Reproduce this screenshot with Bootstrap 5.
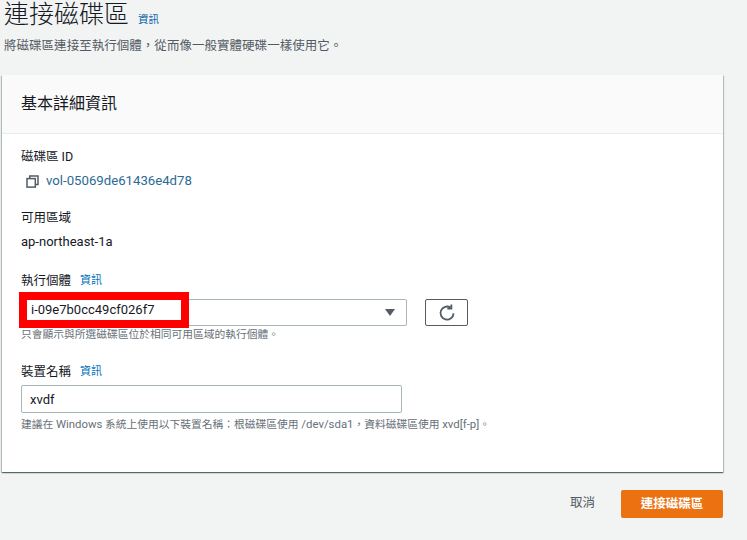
<!DOCTYPE html>
<html lang="zh-Hant">
<head>
<meta charset="utf-8">
<title>連接磁碟區</title>
<link href="https://cdn.jsdelivr.net/npm/bootstrap@5.3.0/dist/css/bootstrap.min.css" rel="stylesheet">
<style>
html,body{height:540px;overflow:hidden}
body{background:#f2f3f3;color:#16191f;font-family:"Roboto","Noto Sans CJK TC",sans-serif;font-size:13px;line-height:20px;width:747px}
.page-head{padding:0 0 0 4px;height:75px}
.page-title{font-size:25px;line-height:30px;font-weight:300;margin:0;color:#16191f;display:flex;align-items:baseline}
.info-link{color:#0073bb;font-size:11px;line-height:16px;text-decoration:none}
.page-title .info-link{margin-left:9px;font-weight:400;color:#0b63a8;font-size:10.5px}
.page-sub{font-size:12.5px;line-height:18px;color:#545b64;margin:7px 0 0;height:18px;letter-spacing:.03px}
.vol-panel{margin-left:2px;width:721px;height:397px;background:#fff;border:0;border-radius:0;box-shadow:0 1px 1px 0 rgba(0,28,36,.45),1px 1px 1px 0 rgba(0,28,36,.2),-1px 1px 1px 0 rgba(0,28,36,.2)}
.vol-head{background:#fafafa;border-bottom:1px solid #eaeded;height:59px;padding:0 19px;display:flex;align-items:center}
.vol-head h2{font-size:16px;font-weight:400;margin:0;line-height:22px}
.vol-body{padding:13px 19px 0}
.fld-label{font-size:12.5px;line-height:20px;height:20px;display:flex;align-items:center;gap:9px}
.fld-gap{margin-top:17px}
.fld-gap-md{margin-top:19px}
.fld-value{line-height:20px;font-size:13px;height:20px;margin-top:4px;display:flex;align-items:center}
.vol-link{color:#2c6a94;text-decoration:none;font-size:13.2px}
.copy-ico{width:13px;height:13px;margin:0 7px 0 5px;flex:none}
.sel-row{display:flex;gap:18px;margin-top:8px;margin-left:-2px}
.sel-box{width:388px;height:27px;border:1px solid #aab7b8;border-radius:2px;background:#fff;position:relative;padding-right:11px;display:flex;align-items:center;justify-content:flex-end}
.sel-arrow{width:0;height:0;border-left:5.5px solid transparent;border-right:5.5px solid transparent;border-top:7px solid #545b64}
.redact{position:absolute;left:-1px;top:-8px;width:170px;height:36px;border:8px solid #f00;background:#fff;padding-left:4px;font-size:13px;line-height:20px;color:#16191f;display:flex;align-items:center;z-index:2;box-sizing:border-box}
.refresh-btn{width:43px;height:27px;padding:0;border:1px solid #545b64;border-radius:2px;background:#fff;display:flex;align-items:center;justify-content:center}
.fld-hint{font-size:10.75px;line-height:16px;color:#687078;height:16px;white-space:nowrap}
.hint-after-sel{margin-top:1px}
.hint-after-input{margin-top:3px}
.hint-latin{font-size:11.4px}
.fld-input{width:381px;height:28px;border:1px solid #aab7b8;border-radius:2px;font-size:13px;line-height:20px;padding:0 8px;color:#16191f;margin-top:3px;box-shadow:none}
.foot-bar{width:723px;display:flex;justify-content:flex-end;align-items:center;margin-top:18px}
.cancel-link{color:#545b64;font-size:12.5px;margin-right:26px;line-height:20px;position:relative;top:-1px}
.go-btn{background:#ec7211;border:0;border-radius:2px;color:#fff;width:102px;height:28px;font-size:12.5px;font-weight:700;padding:0;line-height:20px}
</style>
</head>
<body>
<div class="page-head">
  <h1 class="page-title">連接磁碟區<a class="info-link" href="#">資訊</a></h1>
  <p class="page-sub">將磁碟區連接至執行個體，從而像一般實體硬碟一樣使用它。</p>
</div>
<div class="card vol-panel">
  <div class="vol-head"><h2>基本詳細資訊</h2></div>
  <div class="vol-body">
    <div class="fld-label">磁碟區 ID</div>
    <div class="fld-value">
      <svg class="copy-ico" viewBox="0 0 13 13" fill="none" stroke="#545b64" stroke-width="1.5"><rect x="3.7" y="1" width="8.3" height="8.5" fill="#fff"/><rect x="1" y="3.6" width="8.3" height="8.5" fill="#fff"/></svg>
      <a class="vol-link" href="#">vol-05069de61436e4d78</a>
    </div>
    <div class="fld-label fld-gap">可用區域</div>
    <div class="fld-value">ap-northeast-1a</div>
    <div class="fld-label fld-gap-md">執行個體 <a class="info-link" href="#">資訊</a></div>
    <div class="sel-row">
      <div class="sel-box">
        <div class="redact">i-09e7b0cc49cf026f7</div>
        <span class="sel-arrow"></span>
      </div>
      <button class="btn refresh-btn" type="button" aria-label="重新整理">
        <svg width="18" height="18" viewBox="0 0 16 16" fill="none" stroke="#545b64" stroke-width="1.6"><path d="M13.8 8.3A5.8 5.8 0 1 1 11.2 3.2"/><path d="M11.9 0.4V4H8.3"/></svg>
      </button>
    </div>
    <div class="fld-hint hint-after-sel">只會顯示與所選磁碟區位於相同可用區域的執行個體。</div>
    <div class="fld-label fld-gap-md">裝置名稱 <a class="info-link" href="#">資訊</a></div>
    <input class="form-control fld-input" type="text" value="xvdf">
    <div class="fld-hint hint-after-input">建議在 <span class="hint-latin">Windows</span> 系統上使用以下裝置名稱：根磁碟區使用 <span class="hint-latin">/dev/sda1</span>，資料磁碟區使用 <span class="hint-latin">xvd[f-p]</span>。</div>
  </div>
</div>
<div class="foot-bar">
  <span class="cancel-link">取消</span>
  <button class="btn go-btn" type="button">連接磁碟區</button>
</div>
<script src="https://cdn.jsdelivr.net/npm/bootstrap@5.3.0/dist/js/bootstrap.bundle.min.js"></script>
</body>
</html>
